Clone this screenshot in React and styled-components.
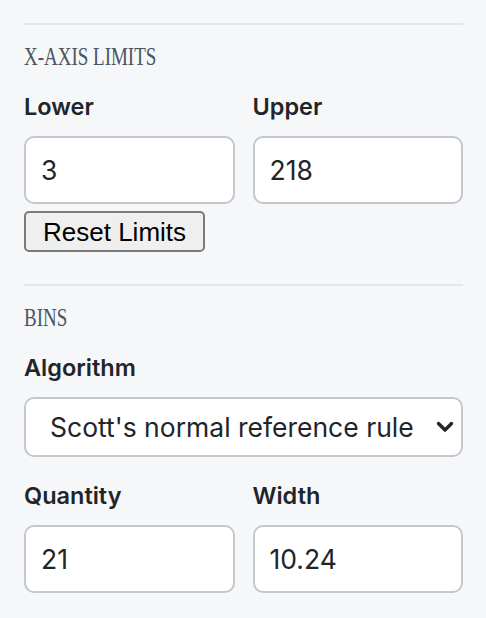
import React from 'react';
import styled, { createGlobalStyle } from 'styled-components';

const Global = createGlobalStyle`
  html, body { margin: 0; padding: 0; background: #f6f7f9; }
  body { font-family: Inter, "Noto Sans", sans-serif; color: #212529; }
  * { box-sizing: border-box; }
`;

const Panel = styled.div`
  display: flex;
  flex-direction: column;
  padding: 23px 23px 0 24px;
`;

const Section = styled.section`
  display: flex;
  flex-direction: column;
  border-top: 2px solid #e3e6ea;
  padding-top: 17px;
  margin-top: ${(p) => p.$mt || 0}px;
`;

const Heading = styled.h3`
  margin: 0;
  font-family: "Liberation Serif", "Times New Roman", serif;
  font-weight: 400;
  font-size: 26px;
  line-height: 30px;
  color: #4a5561;
  transform: scaleX(0.73);
  transform-origin: left center;
  white-space: nowrap;
`;

const Row = styled.div`
  display: grid;
  grid-template-columns: 1fr 1fr;
  column-gap: 18px;
  margin-top: ${(p) => p.$mt || 0}px;
`;

const Field = styled.div`
  display: flex;
  flex-direction: column;
  gap: 15px;
  margin-top: ${(p) => p.$mt || 0}px;
`;

const Label = styled.label`
  font-family: Inter, "Noto Sans", sans-serif;
  font-weight: 600;
  font-size: 23.5px;
  line-height: 28px;
  color: #212529;
`;

const Input = styled.input`
  width: 100%;
  height: 68px;
  border: 2px solid #c3c8cf;
  border-radius: 10px;
  background: #fff;
  padding: 0 15px;
  font-family: Inter, "Noto Sans", sans-serif;
  font-size: 26.5px;
  color: #212529;
  outline: none;
`;

const Button = styled.button`
  align-self: flex-start;
  height: 41px;
  margin-top: 7px;
  padding: 0 17px;
  border: 2px solid #7a7a7a;
  border-radius: 5px;
  background: #efefef;
  font-family: "Liberation Sans", Arial, sans-serif;
  font-size: 26px;
  line-height: 1;
  color: #000;
`;

const SelectWrap = styled.div`
  position: relative;
`;

const Select = styled.select`
  appearance: none;
  -webkit-appearance: none;
  width: 100%;
  height: 60px;
  border: 2px solid #c3c8cf;
  border-radius: 10px;
  background: #fff;
  padding: 0 48px 0 24px;
  font-family: Inter, "Noto Sans", sans-serif;
  font-size: 26.5px;
  color: #212529;
  outline: none;
`;

const Chevron = styled.svg`
  position: absolute;
  right: 9px;
  top: 50%;
  margin-top: -6px;
  width: 18px;
  height: 12px;
  pointer-events: none;
`;

export default function App() {
  return (
    <>
      <Global />
      <Panel>
        <Section>
          <Heading>X-AXIS LIMITS</Heading>
          <Row $mt={21}>
            <Field>
              <Label>Lower</Label>
              <Input defaultValue="3" />
            </Field>
            <Field>
              <Label>Upper</Label>
              <Input defaultValue="218" />
            </Field>
          </Row>
          <Button>Reset Limits</Button>
        </Section>
        <Section $mt={32}>
          <Heading>BINS</Heading>
          <Field $mt={21}>
            <Label>Algorithm</Label>
            <SelectWrap>
              <Select defaultValue="scott">
                <option value="scott">Scott's normal reference rule</option>
                <option value="sturges">Sturges' formula</option>
                <option value="fd">Freedman–Diaconis' choice</option>
              </Select>
              <Chevron viewBox="0 0 18 12">
                <path d="M2.5 2.5 L9 9 L15.5 2.5" fill="none" stroke="#212529" strokeWidth="3.4" strokeLinecap="round" strokeLinejoin="round" />
              </Chevron>
            </SelectWrap>
          </Field>
          <Row $mt={25}>
            <Field>
              <Label>Quantity</Label>
              <Input defaultValue="21" />
            </Field>
            <Field>
              <Label>Width</Label>
              <Input defaultValue="10.24" />
            </Field>
          </Row>
        </Section>
      </Panel>
    </>
  );
}
